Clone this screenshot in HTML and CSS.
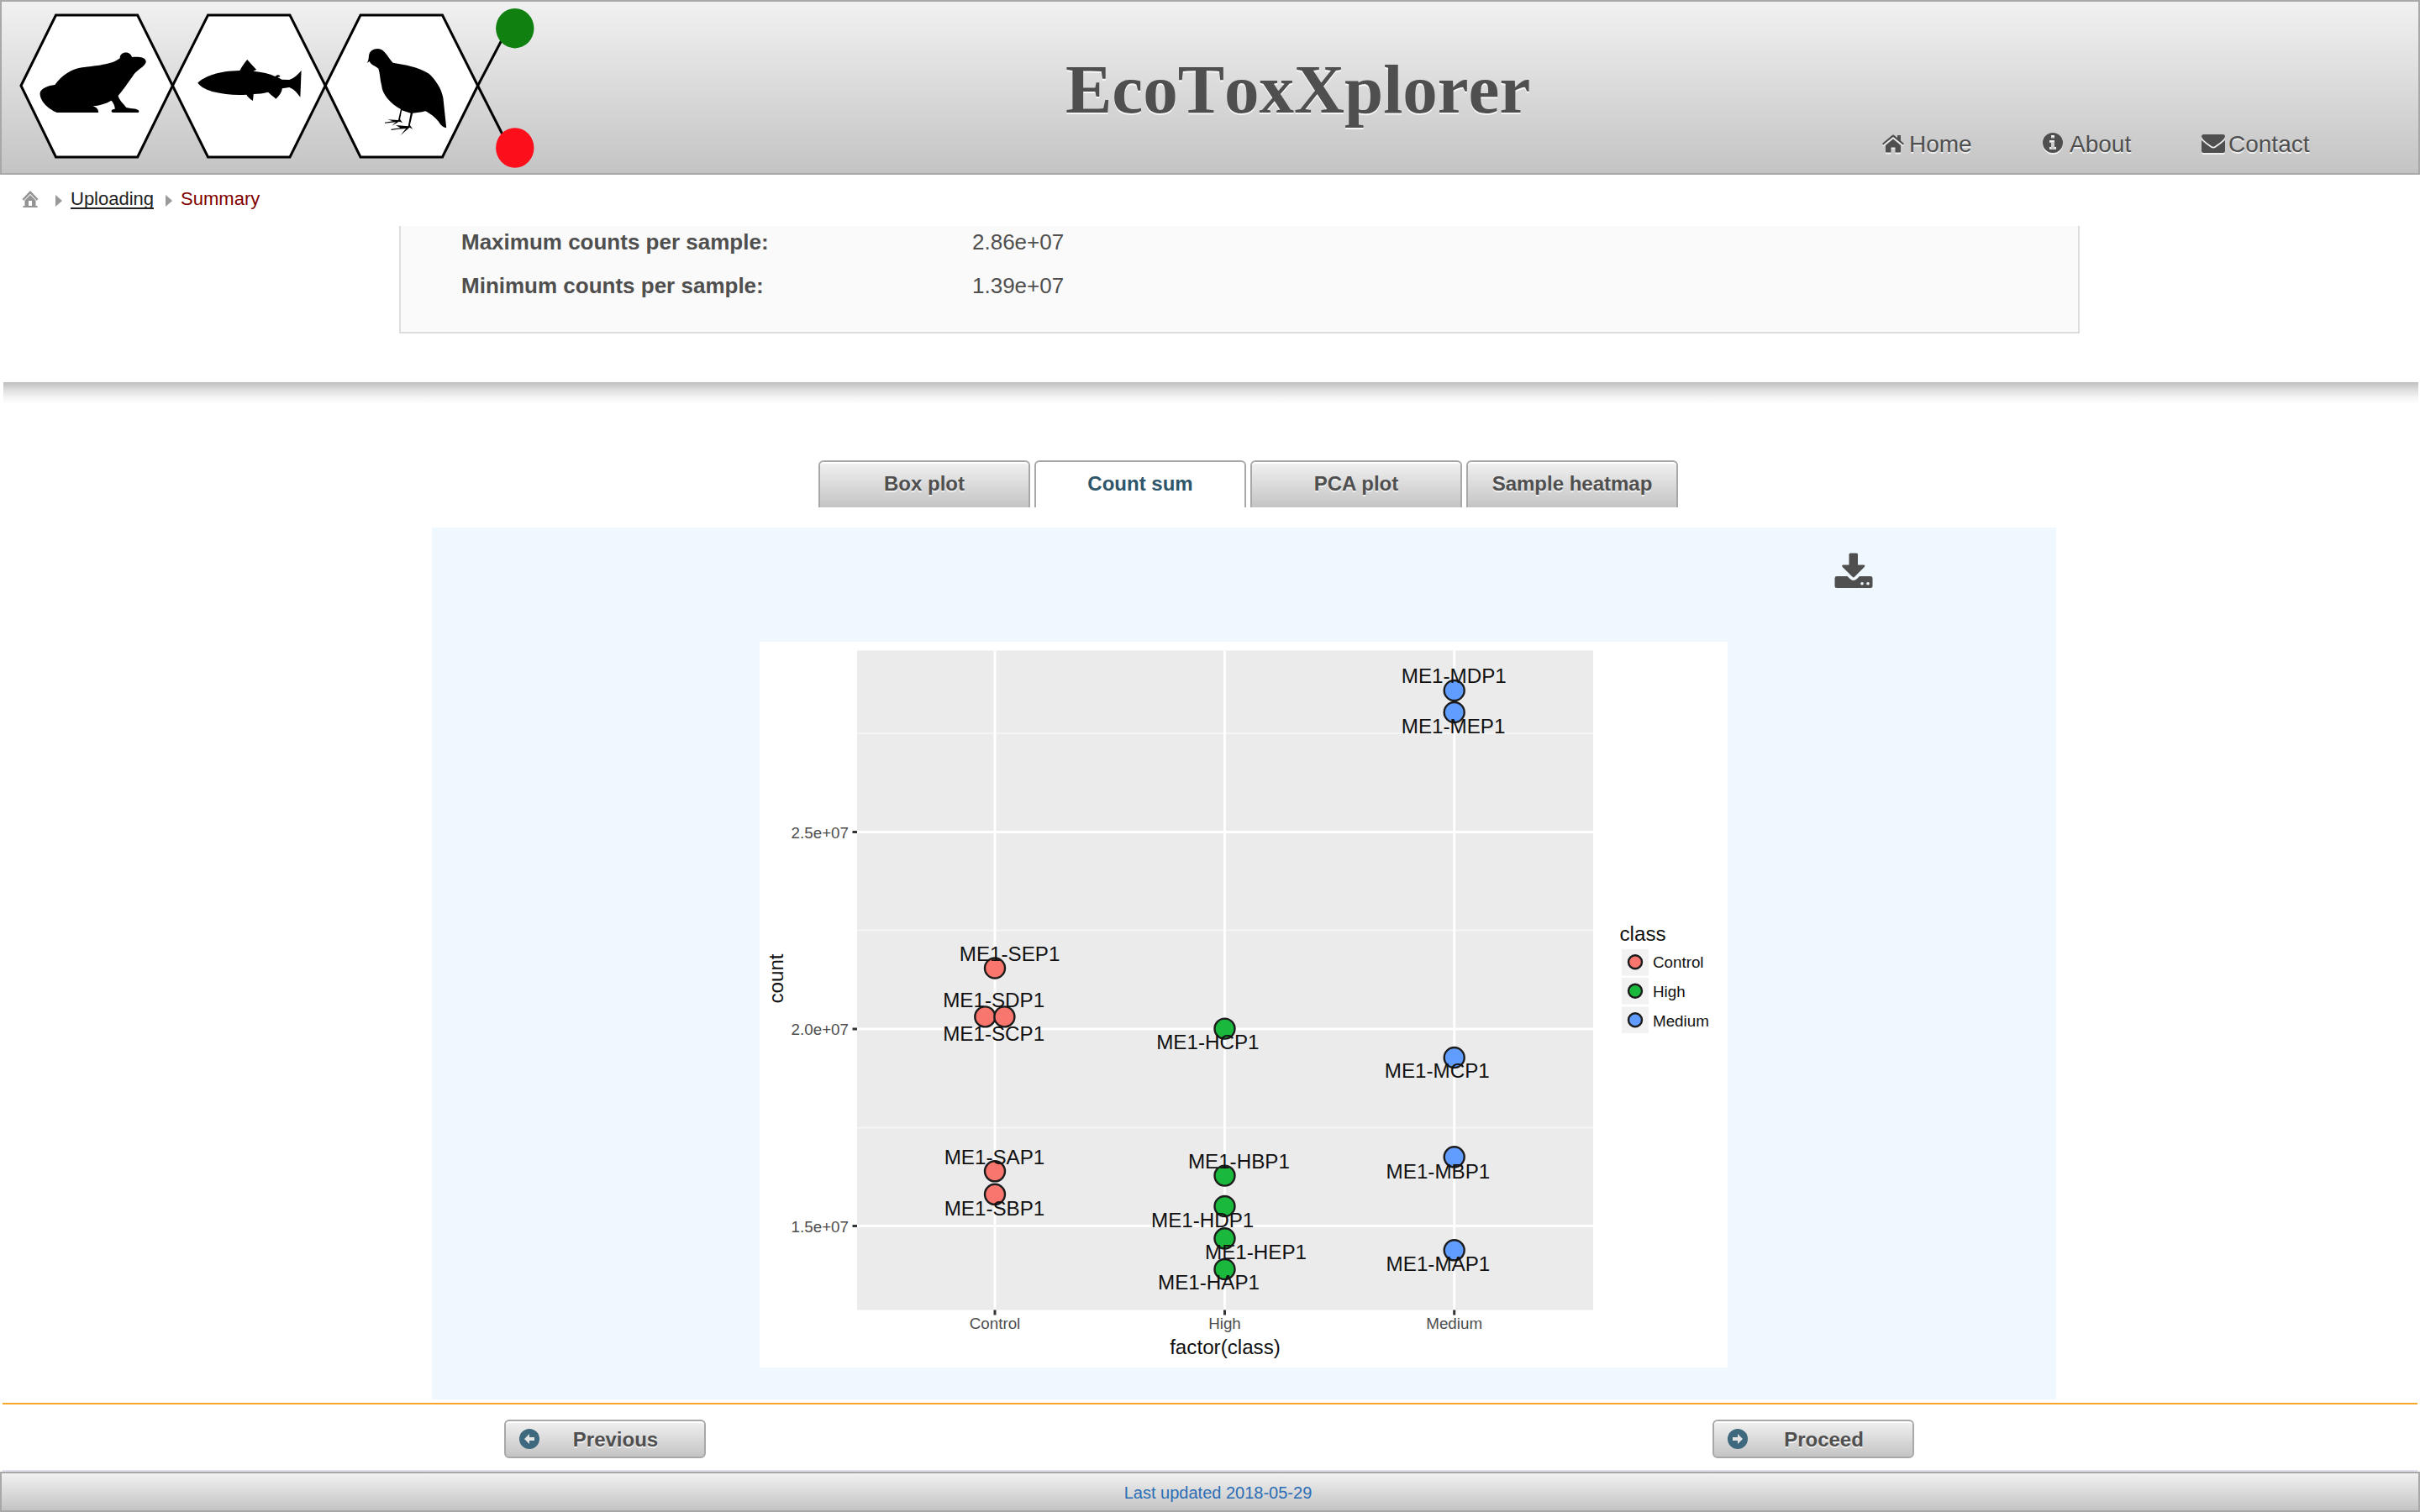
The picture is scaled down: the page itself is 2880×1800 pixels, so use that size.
FILE: index.html
```html
<!DOCTYPE html>
<html lang="en">
<head>
<meta charset="utf-8">
<title>EcoToxXplorer</title>
<link rel="stylesheet" href="styles.css">
</head>
<body>
<header class="header">
  <svg class="logo" viewBox="0 0 650 204" aria-hidden="true">
    <g class="logo-hex">
      <path d="M23 100L64.500 16H161.700L203.400 100L161.700 185H64.500Z"/>
      <path d="M203.400 100L245.500 16H343L385.200 100L343 185H245.500Z"/>
      <path d="M385.200 100L427 16H524.500L566.600 100L524.500 185H427Z"/>
      <path class="logo-bond" d="M597 42L566.600 100L598 162"/>
    </g>
    <ellipse cx="610.800" cy="31.700" rx="22.700" ry="23.700" fill="#108010"/>
    <ellipse cx="610.800" cy="174" rx="22.700" ry="23.700" fill="#fc0f1b"/>
    <g transform="translate(-2 -2) scale(.42092 .33333)">
      <path d="M155 303C175 270 200 247 232 241C270 235 318 231 339 208C339 180 370 182 373 204C390 203 411 202 413 221C408 240 388 248 379 265C363 294 347 325 334 342C338 360 350 371 357 384C372 389 394 386 393 399L391 402H319C311 398 316 389 325 389C325 378 320 366 315 359C298 371 281 377 263 379C273 384 279 390 278 402H161C140 391 113 365 113 333C114 316 137 305 155 303Z"/>
      <path d="M559 296C575 274 617 253 678 252C684 237 693 222 699 213C707 225 718 238 725 249L716 254C741 257 762 263 778 273C783 266 792 266 792 274L785 276L797 284L818 285C831 279 842 267 852 252L849 347C841 333 831 318 818 312L798 316C797 329 790 342 780 353C772 344 765 337 758 329C744 334 730 335 717 336L715 360C706 352 699 345 697 338C640 342 578 329 559 296Z"/>
      <path d="M1037 225C1043 217 1042 205 1043 198C1045 182 1055 174 1068 174C1089 175 1095 204 1111 224C1148 232 1191 240 1218 269C1241 300 1249 325 1253 350L1262 457C1253 455 1246 447 1240 434C1228 415 1213 402 1202 397C1191 401 1178 403 1167 404L1159 447L1167 461L1158 455L1132 484L1148 459L1126 461L1106 465V461L1132 457L1119 447L1154 451L1161 404L1136 394L1131 426L1138 438L1128 434L1108 449L1119 436L1088 440V437L1111 433L1096 427L1126 429L1133 390C1103 369 1081 337 1079 306C1074 283 1075 263 1070 245C1061 235 1048 232 1045 219Z"/>
    </g>
  </svg>
  <h1 class="title">EcoToxXplorer</h1>
  <nav class="nav">
    <a class="nav-home"><svg width="26" height="22" viewBox="0 0 26 22"><path d="M13 5.500L22 13V20.500Q22 21.500 21 21.500H15.500V15.500H10.500V21.500H5Q4 21.500 4 20.500V13Z"/><path d="M0 11L12 .8Q13 0 14 .8L18 4.200V1H22V7.600L26 11L24.800 12.500L13 2.900L1.200 12.500Z"/></svg>Home</a>
    <a class="nav-about"><svg width="24" height="24" viewBox="0 0 24 24"><path fill-rule="evenodd" d="M12 0A12 12 0 1 1 12 24A12 12 0 0 1 12 0ZM10 3H14V6.500H10ZM8 9H14V17H16V20H8V17H10V12H8Z"/></svg>About</a>
    <a class="nav-contact"><svg width="28" height="22" viewBox="0 0 28 22"><path d="M2.500 0H25.500Q28 0 28 2.500C27 7 20 11 16 14Q14 15.500 12 14C8 11 1 7 0 2.500Q0 0 2.500 0Z"/><path d="M0 7Q5 11.500 10.500 15.200Q14 18 17.500 15.200Q23 11.500 28 7V19.500Q28 22 25.500 22H2.500Q0 22 0 19.500Z"/></svg>Contact</a>
  </nav>
</header>

<div class="crumbs">
  <svg class="crumb-home" width="20" height="20" viewBox="0 0 20 20"><path d="M10 0L19.500 10L17.800 11.800L10 3.800L2.200 11.800L.5 10Z"/><path fill-rule="evenodd" d="M3.500 11.500L10 5L16.500 11.500V18H18.500V20H1.500V18H3.500ZM8 12V18H12V12Z"/></svg>
  <i class="arrow"></i><a class="crumb-link">Uploading</a>
  <i class="arrow"></i><span class="crumb-current">Summary</span>
</div>

<main class="content">
  <dl class="summary">
    <dt>Maximum counts per sample:</dt><dd>2.86e+07</dd>
    <dt>Minimum counts per sample:</dt><dd>1.39e+07</dd>
  </dl>
  <div class="divider"></div>
  <div class="tabs">
    <a class="tab">Box plot</a>
    <a class="tab tab-active">Count sum</a>
    <a class="tab">PCA plot</a>
    <a class="tab">Sample heatmap</a>
  </div>
  <section class="panel">
    <svg class="download" width="46" height="42" viewBox="0 0 46 42"><path d="M19 .5H26.500Q28 .5 28 2V14.500H35.500Q37 15.500 36 16.700L24 28.800Q22.800 30 21.600 28.800L9.500 16.700Q8.500 15.500 10 14.500H17.500V2Q17.500 .5 19 .5Z"/><path fill-rule="evenodd" d="M2.500 28H15.500L18.500 31Q22.800 35 27 31L30 28H43Q45.500 28 45.500 30.500V39.500Q45.500 42 43 42H3Q.5 42 .5 39.500V30.500Q.5 28 2.500 28ZM33 35A1.800 1.800 0 1 0 33 38.600A1.800 1.800 0 1 0 33 35ZM40 35A1.800 1.800 0 1 0 40 38.600A1.800 1.800 0 1 0 40 35Z"/></svg>
    <svg class="plot" viewBox="0 0 1152 864">
      <rect class="plot-area" x="116" y="10.500" width="876" height="785"/>
      <path class="grid-minor" d="M116 109H992M116 343.500H992M116 578.500H992"/>
      <path class="grid-major" d="M116 226.500H992M116 461H992M116 695.500H992M280 10.500V795.500M553.500 10.500V795.500M826.700 10.500V795.500"/>
      <path class="ticks" d="M110.500 226.500H116M110.500 461H116M110.500 695.500H116M280 795.500V801.500M553.500 795.500V801.500M826.700 795.500V801.500"/>
      <rect class="key" x="1026" y="366" width="32" height="31.500"/><rect class="key" x="1026" y="400" width="32" height="31.500"/><rect class="key" x="1026" y="434.500" width="32" height="31.500"/>
      <g class="points control">
        <circle cx="280" cy="388.500" r="12"/><circle cx="268.300" cy="446.400" r="12"/><circle cx="291.400" cy="446.400" r="12"/><circle cx="280" cy="630.300" r="12"/><circle cx="280" cy="657.800" r="12"/>
        <circle cx="1042" cy="381.300" r="8"/>
      </g>
      <g class="points high">
        <circle cx="553.500" cy="460.600" r="12"/><circle cx="553.500" cy="635.600" r="12"/><circle cx="553.500" cy="672" r="12"/><circle cx="553.500" cy="710.300" r="12"/><circle cx="553.500" cy="747" r="12"/>
        <circle cx="1042" cy="415.700" r="8"/>
      </g>
      <g class="points medium">
        <circle cx="826.700" cy="58" r="12"/><circle cx="826.700" cy="84" r="12"/><circle cx="826.700" cy="495" r="12"/><circle cx="826.700" cy="613.300" r="12"/><circle cx="826.700" cy="724.300" r="12"/>
        <circle cx="1042" cy="450.300" r="8"/>
      </g>
      <g class="labels">
        <text x="237.800" y="379.500">ME1-SEP1</text>
        <text x="218.200" y="435.100">ME1-SDP1</text>
        <text x="218.200" y="475.100">ME1-SCP1</text>
        <text x="219.700" y="621.500">ME1-SAP1</text>
        <text x="219.700" y="683">ME1-SBP1</text>
        <text x="472.200" y="485.200">ME1-HCP1</text>
        <text x="509.900" y="627.200">ME1-HBP1</text>
        <text x="466" y="697.200">ME1-HDP1</text>
        <text x="530" y="735.200">ME1-HEP1</text>
        <text x="474" y="771.200">ME1-HAP1</text>
        <text x="763.800" y="49.200">ME1-MDP1</text>
        <text x="763.800" y="109.200">ME1-MEP1</text>
        <text x="743.800" y="519.200">ME1-MCP1</text>
        <text x="745.600" y="639.200">ME1-MBP1</text>
        <text x="745.600" y="749.200">ME1-MAP1</text>
      </g>
      <g class="axis-text end">
        <text x="106" y="233.500">2.5e+07</text><text x="106" y="468">2.0e+07</text><text x="106" y="702.500">1.5e+07</text>
      </g>
      <g class="axis-text mid">
        <text x="280" y="818">Control</text><text x="553.500" y="818">High</text><text x="826.700" y="818">Medium</text>
      </g>
      <g class="axis-title">
        <text class="mid" x="554" y="847.500">factor(class)</text>
        <text class="mid" transform="translate(27.500 401) rotate(-90)">count</text>
        <text x="1023.500" y="355.500">class</text>
      </g>
      <g class="legend-text">
        <text x="1063" y="388">Control</text><text x="1063" y="422.500">High</text><text x="1063" y="457.500">Medium</text>
      </g>
    </svg>
  </section>
</main>

<div class="actions">
  <a class="button"><svg width="24" height="24" viewBox="0 0 24 24"><circle cx="12" cy="12" r="12"/><path d="M6 12L12 6V10H18V14H12V18Z"/></svg><span>Previous</span></a>
  <a class="button"><svg width="24" height="24" viewBox="0 0 24 24"><circle cx="12" cy="12" r="12"/><path d="M18 12L12 6V10H6V14H12V18Z"/></svg><span>Proceed</span></a>
</div>
<footer class="footer">Last updated 2018-05-29</footer>
</body>
</html>
```
FILE: styles.css
```css
* { box-sizing: border-box; }

body {
  margin: 0;
  width: 2880px;
  height: 1800px;
  overflow: hidden;
  display: flex;
  flex-direction: column;
  background: #fff;
  color: #4f4f4f;
  font-family: "Liberation Sans", Arial, sans-serif;
}

.header {
  height: 208px;
  flex: none;
  border: 2px solid #a8a8a8;
  background: linear-gradient(#f1f1f1, #c4c4c4);
  display: grid;
  grid-template-columns: 1266px 972px 1fr;
}
.logo { width: 650px; height: 204px; display: block; }
.logo-hex { fill: #fff; stroke: #000; stroke-width: 3; }
.logo-bond { fill: none; }
.title {
  margin: 0;
  padding-top: 58px;
  font: bold 83px/92px "Liberation Serif", "Times New Roman", serif;
  font-kerning: none;
  text-shadow: 0 2px 0 rgba(255, 255, 255, .8);
}
.nav {
  display: flex;
  align-items: flex-start;
  padding-top: 154px;
  font-size: 28px;
  line-height: 32px;
  text-shadow: 0 2px 0 rgba(255, 255, 255, .7);
}
.nav a { display: flex; align-items: flex-start; }
.nav svg { fill: #4f4f4f; filter: drop-shadow(0 2px 0 rgba(255, 255, 255, .7)); }
.nav-home { width: 191px; gap: 6px; }
.nav-home svg { margin-top: 4px; }
.nav-about { width: 189px; gap: 8px; }
.nav-about svg { margin-top: 2px; }
.nav-contact { gap: 4px; }
.nav-contact svg { margin-top: 4px; }

.crumbs {
  height: 61px;
  flex: none;
  display: flex;
  align-items: flex-start;
  padding: 16px 0 0 26px;
  font-size: 22px;
  line-height: 25px;
}
.crumb-home { fill: #949494; margin: 3px 20px 0 0; }
.arrow {
  width: 8px;
  height: 14px;
  margin: 8px 10px 0 0;
  background: #999;
  clip-path: polygon(0 0, 100% 50%, 0 100%);
}
.crumb-link {
  color: #222;
  border-bottom: 2px solid #222;
  height: 25px;
  margin-right: 14px;
}
.crumb-current { color: #800000; }

.content {
  flex: 1;
  min-height: 0;
  display: flex;
  flex-direction: column;
}
.summary {
  margin: 0 405px 0 475px;
  height: 128px;
  flex: none;
  padding: 4px 0 0 72px;
  border: 2px solid #ddd;
  border-top: 0;
  background: #fafafa;
  display: grid;
  grid-template-columns: 608px 1fr;
  grid-auto-rows: 52px;
  align-content: start;
  font-size: 26px;
  line-height: 30px;
}
.summary dt { font-weight: bold; }
.summary dd { margin: 0; }

.divider {
  height: 26px;
  flex: none;
  margin: 58px 2px 0 4px;
  background: linear-gradient(#bebebe, #dedede 35%, #f4f4f4 70%, #fff);
}

.tabs {
  display: flex;
  gap: 5px;
  margin: 67px 0 0 974px;
}
.tab {
  width: 252px;
  height: 56px;
  border: 2px solid #a8a8a8;
  border-bottom: 0;
  border-radius: 6px 6px 0 0;
  background: linear-gradient(#f1f1f1, #c4c4c4);
  box-shadow: inset 0 2px 0 #fff;
  padding-top: 12px;
  text-align: center;
  font-size: 24px;
  font-weight: bold;
  line-height: 28px;
  text-shadow: 0 2px 0 rgba(255, 255, 255, .7);
}
.tab-active { background: #fff; color: #2e566a; }

.panel {
  width: 1933px;
  height: 1038px;
  flex: none;
  margin: 24px 0 0 514px;
  background: #f0f8ff;
}
.download { display: block; margin: 30px 0 64px 1669px; fill: #4f4f4f; }
.plot {
  display: block;
  width: 1152px;
  height: 864px;
  margin-left: 390px;
  background: #fff;
}
.plot-area { fill: #ebebeb; }
.grid-minor { stroke: #f5f5f5; stroke-width: 2; }
.grid-major { stroke: #fff; stroke-width: 3; }
.ticks { stroke: #333; stroke-width: 3; }
.points { stroke: #1c1c1c; stroke-width: 2.4; }
.control { fill: #f8766d; }
.high { fill: #1bb83e; }
.medium { fill: #619cff; }
.key { fill: #f2f2f2; }
.labels { font-size: 24.2px; fill: #111; }
.axis-text { font-size: 18.8px; fill: #4d4d4d; }
.end { text-anchor: end; }
.mid { text-anchor: middle; }
.axis-title { font-size: 24.2px; fill: #111; }
.legend-text { font-size: 18.8px; fill: #111; }

.actions {
  height: 82px;
  flex: none;
  margin: 0 3px;
  border-top: 2px solid #fba52a;
  border-bottom: 2px solid #e0e0ec;
  display: flex;
  gap: 1198px;
  padding: 18px 0 0 597px;
}
.button {
  width: 240px;
  height: 46px;
  border: 2px solid #a8a8a8;
  border-radius: 6px;
  background: linear-gradient(#f1f1f1, #c4c4c4);
  box-shadow: inset 0 2px 0 #fff;
  display: flex;
  align-items: center;
  padding-left: 16px;
  font-size: 24px;
  font-weight: bold;
  line-height: 28px;
  text-shadow: 0 2px 0 rgba(255, 255, 255, .7);
}
.button span { width: 181px; padding-top: 1px; text-align: center; }
.button circle { fill: #3d687d; }
.button path { fill: #e4e4e4; }

.footer {
  height: 48px;
  flex: none;
  border: 2px solid #a8a8a8;
  background: linear-gradient(#f1f1f1, #c4c4c4);
  text-align: center;
  padding: 12px 0 0 19px;
  font-size: 20px;
  line-height: 23px;
  color: #2a6db5;
}
```
